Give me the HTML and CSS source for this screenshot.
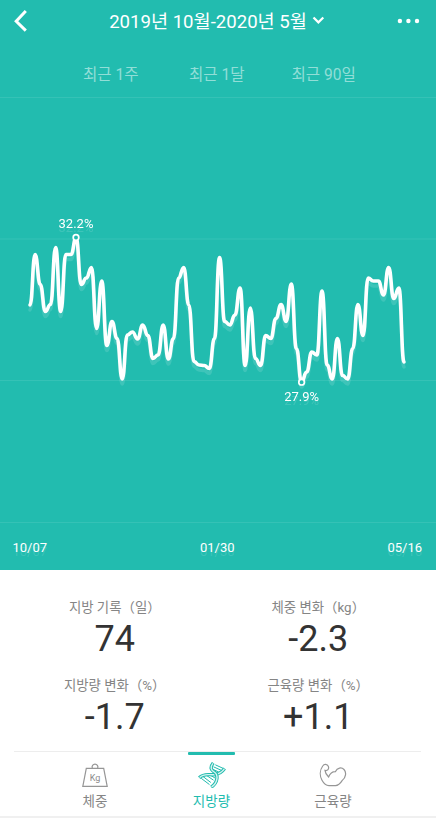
FILE: index.html
```html
<!DOCTYPE html>
<html lang="ko">
<head>
<meta charset="utf-8">
<meta name="viewport" content="width=device-width, initial-scale=1">
<title>지방량</title>
<link rel="stylesheet" href="styles.css">
</head>
<body>
<main class="app">
  <section class="trend">
    <header class="topbar">
      <svg class="back" width="16" height="24" viewBox="0 0 16 24"><path d="M12.8 2 3.2 12.2 12.8 21.6"/></svg>
      <h1 class="period">2019년 10월-2020년 5월<svg class="caret" width="13" height="8" viewBox="0 0 13 8"><path d="M1.5 1.5 6.4 6.4 11.3 1.5"/></svg></h1>
      <svg class="more" width="24" height="6" viewBox="0 0 24 6"><circle cx="1.9" cy="3" r="2.2"/><circle cx="10.4" cy="3" r="2.2"/><circle cx="19" cy="3" r="2.2"/></svg>
    </header>
    <nav class="ranges"><span>최근 1주</span><span>최근 1달</span><span>최근 90일</span></nav>
    <svg class="chart" width="436" height="427" viewBox="0 96 436 427">
      <path class="grid" d="M0 97.5H436M0 239H436M0 380.5H436M0 522.5H436"/>
      <path class="line shadow" transform="translate(0 5)"/>
      <path class="line"/>
      <circle class="dot" cx="76" cy="237.5" r="2.8"/>
      <circle class="dot" cx="301.6" cy="382.2" r="2.8"/>
      <text class="value" x="76" y="227.5">32.2%</text>
      <text class="value" x="301.6" y="400.5">27.9%</text>
    </svg>
    <div class="dates"><span>10/07</span><span>01/30</span><span>05/16</span></div>
  </section>
  <section class="stats">
    <div class="stat"><span class="label">지방 기록（일）</span><strong>74</strong></div>
    <div class="stat"><span class="label">체중 변화（kg）</span><strong>-2.3</strong></div>
    <div class="stat"><span class="label">지방량 변화（%）</span><strong>-1.7</strong></div>
    <div class="stat"><span class="label">근육량 변화（%）</span><strong>+1.1</strong></div>
  </section>
  <nav class="tabs">
    <a class="tab">
      <svg width="28" height="26" viewBox="0 0 28 26"><path d="M5.3 6.3H22.7L26.2 24.4H1.8Z"/><path d="M11.3 6.1a2.9 2.9 0 1 1 5.4 0"/><text class="kg" x="14" y="18.5">Kg</text></svg>
      <span>체중</span>
    </a>
    <a class="tab active">
      <svg width="28" height="26" viewBox="0 0 28 26">
        <path d="M15.5 4.8 23 8.2M14.8 7.3 20.5 9.9M17.3 2.8 25 6.3M5 14.5 12.8 20.5M8.5 13.4 15.5 18.2M3.2 16.3 11.5 22.6M12 13 17 16"/>
        <path class="strand" d="M1.2 15.8C6.5 10.5 11.5 13.5 17 12.6 22 11.8 24.5 9.5 26.6 6.6"/>
        <path class="core" d="M1.6 15.5C6.5 10.5 11.5 13.5 17 12.6 22 11.8 24.5 9.5 26.3 6.9"/>
        <path class="strand" d="M15.3 1C11.5 5.5 13.3 8.2 16.2 10 20.5 12.7 20 20.5 13.2 25.2"/>
        <path class="core" d="M15 1.4C11.5 5.5 13.3 8.2 16.2 10 20.5 12.7 20 20.5 13.6 24.9"/>
      </svg>
      <span>지방량</span>
    </a>
    <a class="tab">
      <svg width="28" height="26" viewBox="0 0 28 26"><path d="M9.6 15C7.6 13.2 6.2 10.8 6 8.4 8.5 9 10.4 7 9.3 4.3 8.3 2 5.2 1.7 3.7 4 .7 8.2.6 14 3 18.3 5 22 7 23.6 10 23.6H16.5C19.5 23.6 21.5 21.2 23.3 18.4 27 15.4 27.6 10.2 25 7.5 22.6 5 18.2 5.5 16.5 9.6 13.7 9.5 11 11.5 9.6 15Z"/></svg>
      <span>근육량</span>
    </a>
  </nav>
</main>
<script src="chart.js"></script>
</body>
</html>
```
FILE: styles.css
```css
* { box-sizing: border-box; }
body { margin: 0; background: #fff; font-family: Roboto, "Noto Sans CJK KR", sans-serif; }
.app { width: 436px; height: 818px; display: flex; flex-direction: column; border-bottom: 2px solid #f0f0f0; overflow: hidden; }
.trend { height: 570px; flex: none; background: #22bcaf; color: #fff; display: flex; flex-direction: column; }
.topbar { height: 41px; display: flex; align-items: center; justify-content: space-between; padding: 0 14px 0 13px; }
.back, .caret { fill: none; stroke: #fff; stroke-width: 3; }
.caret { stroke-width: 2.2; margin-left: 5px; }
.more { fill: #fff; overflow: visible; }
.period { margin: 0; padding: 0 0 2px 7px; font-size: 18.6px; font-weight: 400; display: flex; align-items: center; white-space: pre; }
.ranges { height: 55px; padding: 13px 0 0 83px; display: flex; align-items: center; font-size: 15.6px; line-height: 24px; color: #91ded7; white-space: nowrap; }
.ranges span { width: 106px; }
.ranges span:nth-child(2) { width: 102.5px; }
.chart { display: block; flex: none; }
.grid { stroke: #35c2b6; fill: none; }
.line { fill: none; stroke: #fff; stroke-width: 3.6; stroke-linecap: round; stroke-linejoin: round; }
.shadow { stroke-opacity: .13; }
.dot { fill: #22bcaf; stroke: #fff; stroke-width: 1.7; }
.value { font-size: 13px; fill: #fff; text-anchor: middle; filter: drop-shadow(0 4px 0 rgba(255,255,255,.13)); }
.dates { flex: 1; display: flex; justify-content: space-between; padding: 17px 14px 0 12.5px; font-size: 13px; line-height: 16px; text-shadow: 0 4px 0 rgba(255,255,255,.13); }
.stats { flex: none; height: 181px; padding: 27px 16px 0 13px; display: grid; grid-template-columns: 1fr 1fr; grid-template-rows: 78px 78px; }
.stat { display: flex; flex-direction: column; align-items: center; }
.label { font-size: 13.4px; line-height: 21px; color: #858585; white-space: nowrap; }
.stat strong { font-size: 36px; line-height: 42px; font-weight: 400; color: #333; }
.tabs { flex: 1; margin: 0 15px 0 14px; padding-left: 24px; border-top: 1px solid #ededed; display: grid; grid-template-columns: 114px 119px 124px; }
.tab { display: flex; flex-direction: column; align-items: center; padding-top: 10px; font-size: 13.5px; line-height: 20px; color: #858585; position: relative; }
.tab svg { fill: none; stroke: #969696; stroke-width: 1.2; margin-bottom: 3px; flex: none; }
.tab .kg { font-size: 9px; fill: #8c8c8c; stroke: none; text-anchor: middle; }
.active { color: #22bcaf; }
.active svg { stroke: #22bcaf; stroke-width: 1; }
.active .strand { stroke-width: 3.4; }
.active .core { stroke: #d8f3f0; stroke-width: 1.4; }
.active::before { content: ""; position: absolute; top: 0; width: 47px; height: 3px; border-radius: 1px; background: #22bcaf; }
```
FILE: chart.js
```js
const levels = [305,254.5,284.5,311.5,304.5,247.5,311.5,254.5,254.5,237.5,284.5,278,267.5,328.5,281,345.5,321.5,338.5,379,335,332,339,325,335.5,358.5,355,325,359,338.5,278,267.5,305,361.5,365,365.5,368.5,338.5,257.5,321.5,325,315,288,365.5,308,358.5,365.5,335.5,338.5,318.5,304.5,321.5,284,348.5,382,372,352,355,291,365,379,338.5,375.5,379,348.5,304.5,335.5,278,281,281,295,267.5,298.5,288,362];
const step = 374 / (levels.length - 1);
let d = `M30 ${levels[0]}`;
for (let i = 1; i < levels.length; i++) {
  const x = 30 + i * step;
  const mid = x - step / 2;
  d += `C${mid} ${levels[i - 1]} ${mid} ${levels[i]} ${x} ${levels[i]}`;
}
document.querySelectorAll('.line').forEach(p => p.setAttribute('d', d));
```
